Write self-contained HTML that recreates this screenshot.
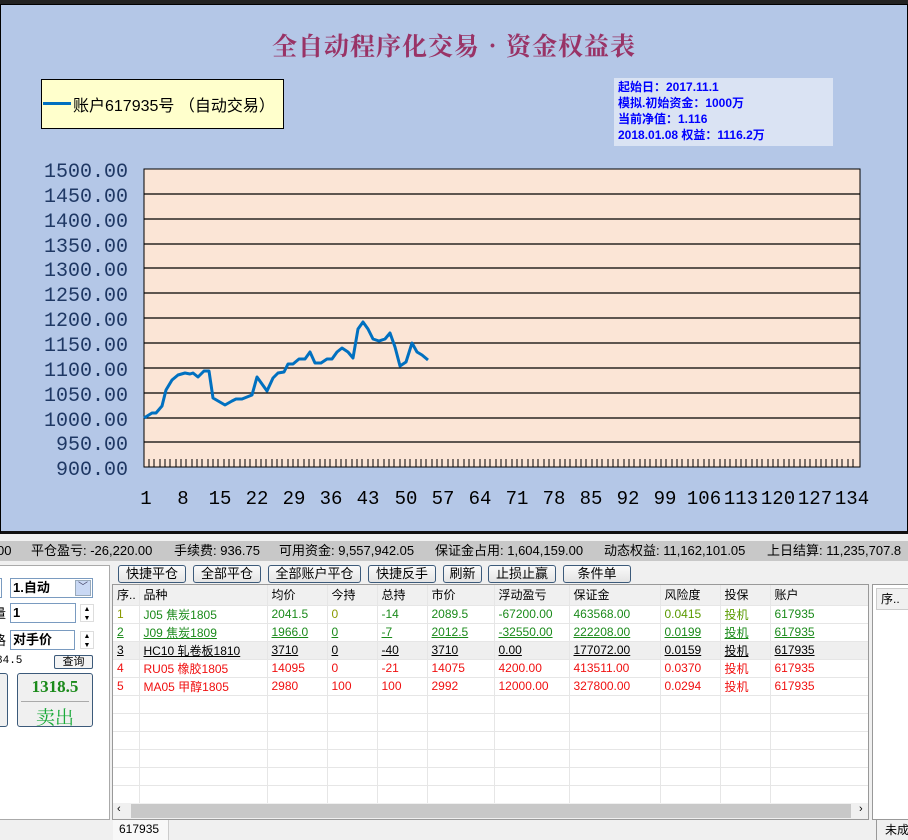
<!DOCTYPE html>
<html><head><meta charset="utf-8"><style>
*{margin:0;padding:0;box-sizing:border-box}
body{width:908px;height:840px;overflow:hidden;background:#f0f0f0;font-family:"Liberation Sans","Noto Sans CJK SC",sans-serif;position:relative}
.a{position:absolute}
.s{font-family:"Liberation Serif","Noto Serif CJK SC",serif}
.btn{position:absolute;top:565px;height:18px;border:1px solid #3c5a7a;border-radius:3px;background:linear-gradient(#fafafa,#e4e4e4);font-size:13px;text-align:center;line-height:16px;color:#000}
table{border-collapse:collapse;font-size:12px}
td{height:18px;padding-left:4px;border-right:1px solid #e6e6e6;border-bottom:1px solid #e6e6e6;white-space:nowrap}
.g td{color:#1a8a1a}.r td{color:#f01010}.u td{text-decoration:underline}
</style></head><body>
<div class="a" style="left:0;top:0;width:908px;height:4px;background:#222"></div>
<div class="a" style="left:0;top:4px;width:908px;height:530px;background:#b4c7e7;border:1px solid #000;border-bottom:3px solid #111"></div>
<div class="a" style="left:0;top:27px;width:908px;text-align:center;font-size:25px;letter-spacing:1px;color:#993366;font-family:'Noto Serif CJK SC',serif;font-weight:bold">全自动程序化交易•资金权益表</div>
<div class="a" style="left:41px;top:79px;width:243px;height:50px;background:#ffffcc;border:1px solid #000"></div>
<div class="a" style="left:43px;top:102px;width:28px;height:3px;background:#0070c0"></div>
<div class="a" style="left:73px;top:92px;font-size:16px;font-family:'Liberation Sans','Noto Sans CJK SC',sans-serif">账户617935号 （自动交易）</div>
<div class="a" style="left:614px;top:78px;width:219px;height:68px;background:#dae3f3;color:#0000ff;font-size:12px;font-weight:bold;line-height:16px;padding:1px 0 0 4px;font-family:'Liberation Sans Narrow','Liberation Sans','Noto Sans CJK SC',sans-serif">起始日：2017.11.1<br>模拟.初始资金：1000万<br>当前净值：1.116<br>2018.01.08 权益：1116.2万</div>
<svg class="a" style="left:0;top:0" width="908" height="540">
<rect x="144" y="169" width="716" height="298" fill="#fbe5d6" stroke="#000"/>
<g stroke="#000" stroke-width="1.2">
<line x1="144" x2="860" y1="194" y2="194"/><line x1="144" x2="860" y1="219" y2="219"/><line x1="144" x2="860" y1="244" y2="244"/><line x1="144" x2="860" y1="268" y2="268"/><line x1="144" x2="860" y1="293" y2="293"/><line x1="144" x2="860" y1="318" y2="318"/><line x1="144" x2="860" y1="343" y2="343"/><line x1="144" x2="860" y1="368" y2="368"/><line x1="144" x2="860" y1="393" y2="393"/><line x1="144" x2="860" y1="418" y2="418"/><line x1="144" x2="860" y1="442" y2="442"/>
</g>
<path d="M149 467v-8M154 467v-8M160 467v-8M165 467v-8M170 467v-8M176 467v-8M181 467v-8M186 467v-8M192 467v-8M197 467v-8M202 467v-8M208 467v-8M213 467v-8M218 467v-8M224 467v-8M229 467v-8M234 467v-8M240 467v-8M245 467v-8M250 467v-8M256 467v-8M261 467v-8M266 467v-8M272 467v-8M277 467v-8M282 467v-8M288 467v-8M293 467v-8M298 467v-8M304 467v-8M309 467v-8M314 467v-8M320 467v-8M325 467v-8M330 467v-8M336 467v-8M341 467v-8M346 467v-8M352 467v-8M357 467v-8M362 467v-8M368 467v-8M373 467v-8M378 467v-8M384 467v-8M389 467v-8M394 467v-8M400 467v-8M405 467v-8M410 467v-8M416 467v-8M421 467v-8M426 467v-8M432 467v-8M437 467v-8M442 467v-8M448 467v-8M453 467v-8M458 467v-8M464 467v-8M469 467v-8M474 467v-8M480 467v-8M485 467v-8M490 467v-8M496 467v-8M501 467v-8M506 467v-8M512 467v-8M517 467v-8M522 467v-8M528 467v-8M533 467v-8M538 467v-8M544 467v-8M549 467v-8M554 467v-8M560 467v-8M565 467v-8M570 467v-8M576 467v-8M581 467v-8M586 467v-8M592 467v-8M597 467v-8M602 467v-8M608 467v-8M613 467v-8M618 467v-8M624 467v-8M629 467v-8M634 467v-8M640 467v-8M645 467v-8M650 467v-8M656 467v-8M661 467v-8M666 467v-8M672 467v-8M677 467v-8M682 467v-8M688 467v-8M693 467v-8M698 467v-8M704 467v-8M709 467v-8M714 467v-8M720 467v-8M725 467v-8M730 467v-8M736 467v-8M741 467v-8M746 467v-8M752 467v-8M757 467v-8M762 467v-8M768 467v-8M773 467v-8M778 467v-8M784 467v-8M789 467v-8M794 467v-8M800 467v-8M805 467v-8M810 467v-8M816 467v-8M821 467v-8M826 467v-8M832 467v-8M837 467v-8M842 467v-8M848 467v-8M853 467v-8" stroke="#000" stroke-width="1"/>
<polyline fill="none" stroke="#0070c0" stroke-width="3" stroke-linejoin="round" points="144,418 152,413 156,413 162,406 166,390 172,380 178,375 185,373 190,374 193,373 198,377 204,371 209,371 213,398 225,405 232,401 236,399 242,399 252,395 257,377 267,391 273,378 278,373 284,372 288,364 293,364 299,359 305,359 310,352 315,363 321,363 327,359 332,359 337,352 342,348 348,352 353,358 358,329 363,322 368,329 373,339 379,341 385,339 390,333 395,347 400,366 406,362 412,343 417,352 422,355 428,360"/>
<g font-family="Liberation Mono,monospace" font-size="20" fill="#1f3864" text-anchor="end">
<text x="128" y="177">1500.00</text><text x="128" y="202">1450.00</text><text x="128" y="227">1400.00</text><text x="128" y="252">1350.00</text><text x="128" y="276">1300.00</text><text x="128" y="301">1250.00</text><text x="128" y="326">1200.00</text><text x="128" y="351">1150.00</text><text x="128" y="376">1100.00</text><text x="128" y="401">1050.00</text><text x="128" y="426">1000.00</text><text x="128" y="450">950.00</text><text x="128" y="475">900.00</text>
</g>
<g font-family="Liberation Mono,monospace" font-size="19" fill="#000" text-anchor="middle">
<text x="146" y="504">1</text><text x="183" y="504">8</text><text x="220" y="504">15</text><text x="257" y="504">22</text><text x="294" y="504">29</text><text x="331" y="504">36</text><text x="368" y="504">43</text><text x="406" y="504">50</text><text x="443" y="504">57</text><text x="480" y="504">64</text><text x="517" y="504">71</text><text x="554" y="504">78</text><text x="591" y="504">85</text><text x="628" y="504">92</text><text x="665" y="504">99</text><text x="704" y="504">106</text><text x="741" y="504">113</text><text x="778" y="504">120</text><text x="815" y="504">127</text><text x="852" y="504">134</text>
</g>
</svg>
<div class="a" style="left:0;top:541px;width:908px;height:20px;background:#c8c8c8;font-size:13px;line-height:20px;white-space:nowrap;word-spacing:0">
<span style="position:absolute;left:-3px">00</span><span style="position:absolute;left:31px">平仓盈亏: -26,220.00</span><span style="position:absolute;left:174px">手续费: 936.75</span><span style="position:absolute;left:279px">可用资金: 9,557,942.05</span><span style="position:absolute;left:435px">保证金占用: 1,604,159.00</span><span style="position:absolute;left:604px">动态权益: 11,162,101.05</span><span style="position:absolute;left:767px">上日结算: 11,235,707.8</span></div>
<!-- left panel -->
<div class="a" style="left:-2px;top:565px;width:112px;height:255px;background:#fff;border:1px solid #aaa"></div>
<div class="a" style="left:-4px;top:578px;width:6px;height:20px;border:1px solid #7a9bc0"></div>
<div class="a" style="left:10px;top:578px;width:83px;height:20px;border:1px solid #7a9bc0;background:#fff;font-size:13px;font-weight:bold;line-height:18px;padding-left:2px">1.自动</div>
<div class="a" style="left:75px;top:580px;width:16px;height:16px;background:#c9d8f4;border:1px solid #9ab;color:#446;font-size:10px;text-align:center;line-height:14px">﹀</div>
<div class="a" style="left:-7px;top:603px;font-size:13px">量</div>
<div class="a" style="left:10px;top:603px;width:66px;height:20px;border:1px solid #7a9bc0;background:#fff;font-size:13px;font-weight:bold;line-height:18px;padding-left:2px">1</div>
<div class="a" style="left:80px;top:604px;width:14px;height:18px;font-size:7px;line-height:9px;text-align:center;border:1px solid #ddd">▲<br>▼</div>
<div class="a" style="left:-7px;top:630px;font-size:13px">格</div>
<div class="a" style="left:10px;top:630px;width:65px;height:20px;border:1px solid #7a9bc0;background:#fff;font-size:13px;font-weight:bold;line-height:18px;padding-left:2px">对手价</div>
<div class="a" style="left:80px;top:631px;width:14px;height:18px;font-size:7px;line-height:9px;text-align:center;border:1px solid #ddd">▲<br>▼</div>
<div class="a" style="left:-4px;top:655px;font-size:11px;font-family:'Liberation Mono',monospace">84.5</div>
<div class="a" style="left:54px;top:655px;width:39px;height:14px;border:1px solid #3c5a7a;border-radius:2px;font-size:11px;line-height:12px;text-align:center;background:#f4f4f4">查询</div>
<div class="a" style="left:-4px;top:673px;width:12px;height:54px;border:1px solid #3c5a7a;border-radius:3px;background:#f0f0f0"></div>
<div class="a" style="left:17px;top:673px;width:76px;height:54px;border:1px solid #3c5a7a;border-radius:3px;background:#f0f0f0"></div>
<div class="a s" style="left:17px;top:677px;width:76px;text-align:center;font-size:17px;font-weight:bold;color:#1a8a1a">1318.5</div>
<div class="a" style="left:21px;top:701px;width:68px;height:1px;background:#aaa"></div>
<div class="a s" style="left:17px;top:703px;width:76px;text-align:center;font-size:19px;color:#1aaa3a">卖出</div>
<!-- buttons -->
<div class="btn" style="left:118px;width:68px">快捷平仓</div>
<div class="btn" style="left:193px;width:68px">全部平仓</div>
<div class="btn" style="left:268px;width:93px">全部账户平仓</div>
<div class="btn" style="left:368px;width:68px">快捷反手</div>
<div class="btn" style="left:443px;width:39px">刷新</div>
<div class="btn" style="left:488px;width:68px">止损止赢</div>
<div class="btn" style="left:563px;width:68px">条件单</div>
<!-- table -->
<div class="a" style="left:112px;top:584px;width:757px;height:236px;background:#fff;border:1px solid #999;overflow:hidden">
<table style="width:760px">
<tr style="background:#f0f0f0;height:20px"><td style="width:26px">序..</td><td style="width:128px">品种</td><td style="width:60px">均价</td><td style="width:50px">今持</td><td style="width:50px">总持</td><td style="width:67px">市价</td><td style="width:75px">浮动盈亏</td><td style="width:91px">保证金</td><td style="width:60px">风险度</td><td style="width:50px">投保</td><td>账户</td></tr>
<tr class="g"><td style="color:#8a9a00">1</td><td>J05 焦炭1805</td><td>2041.5</td><td style="color:#8a9a00">0</td><td>-14</td><td>2089.5</td><td>-67200.00</td><td>463568.00</td><td style="color:#5a9a00">0.0415</td><td style="color:#5a9a00">投机</td><td>617935</td></tr>
<tr class="g u"><td>2</td><td>J09 焦炭1809</td><td>1966.0</td><td>0</td><td>-7</td><td>2012.5</td><td>-32550.00</td><td>222208.00</td><td>0.0199</td><td>投机</td><td>617935</td></tr>
<tr class="u" style="background:#efefef"><td>3</td><td>HC10 轧卷板1810</td><td>3710</td><td>0</td><td>-40</td><td>3710</td><td>0.00</td><td>177072.00</td><td>0.0159</td><td>投机</td><td>617935</td></tr>
<tr class="r"><td>4</td><td>RU05 橡胶1805</td><td>14095</td><td>0</td><td>-21</td><td>14075</td><td>4200.00</td><td>413511.00</td><td>0.0370</td><td>投机</td><td>617935</td></tr>
<tr class="r"><td>5</td><td>MA05 甲醇1805</td><td>2980</td><td>100</td><td>100</td><td>2992</td><td>12000.00</td><td>327800.00</td><td>0.0294</td><td>投机</td><td>617935</td></tr>
<tr><td></td><td></td><td></td><td></td><td></td><td></td><td></td><td></td><td></td><td></td><td></td></tr>
<tr><td></td><td></td><td></td><td></td><td></td><td></td><td></td><td></td><td></td><td></td><td></td></tr>
<tr><td></td><td></td><td></td><td></td><td></td><td></td><td></td><td></td><td></td><td></td><td></td></tr>
<tr><td></td><td></td><td></td><td></td><td></td><td></td><td></td><td></td><td></td><td></td><td></td></tr>
<tr><td></td><td></td><td></td><td></td><td></td><td></td><td></td><td></td><td></td><td></td><td></td></tr>
<tr><td></td><td></td><td></td><td></td><td></td><td></td><td></td><td></td><td></td><td></td><td></td></tr>
</table>
<div class="a" style="left:0;top:218px;width:757px;height:16px;background:#f0f0f0"></div>
<div class="a" style="left:18px;top:219px;width:720px;height:14px;background:#c8c8c8"></div>
<div class="a" style="left:4px;top:218px;font-size:11px">‹</div><div class="a" style="left:746px;top:218px;font-size:11px">›</div>
</div>
<div class="a" style="left:113px;top:820px;width:56px;height:20px;background:#f8f8f8;border-right:1px solid #ccc;font-size:12px;line-height:18px;padding-left:6px">617935</div>
<!-- right panel -->
<div class="a" style="left:872px;top:584px;width:40px;height:236px;background:#fff;border:1px solid #999"></div>
<div class="a" style="left:876px;top:588px;width:36px;height:22px;background:#f0f0f0;border:1px solid #ccc;font-size:12px;line-height:20px;padding-left:4px">序..</div>
<div class="a" style="left:876px;top:820px;width:36px;height:20px;font-size:12px;line-height:20px;padding-left:8px;border-left:1px solid #999">未成</div>
</body></html>
